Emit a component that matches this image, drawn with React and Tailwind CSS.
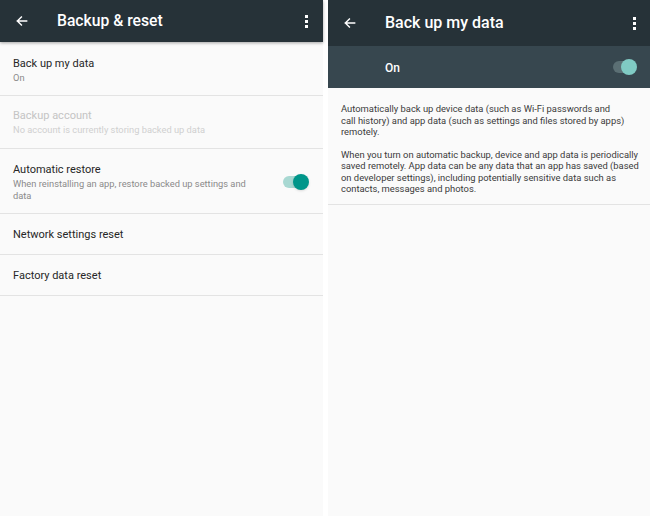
import React from "react";

const font = { fontFamily: "Roboto, 'Noto Sans', sans-serif" };

function Arrow() {
  return (
    <svg width="14" height="14" viewBox="0 0 24 24" fill="none">
      <path d="M20 12H4M11 5l-7 7 7 7" stroke="#fff" strokeWidth="2.4" strokeLinecap="square" />
    </svg>
  );
}

function Dots() {
  return (
    <div className="flex flex-col gap-[2px]">
      <div className="w-[3px] h-[3px] bg-white" />
      <div className="w-[3px] h-[3px] bg-white" />
      <div className="w-[3px] h-[3px] bg-white" />
    </div>
  );
}

function Row({ title, sub, disabled, toggle, h }) {
  return (
    <div className={`flex items-center border-b border-[#e3e3e3] pl-[13px] pr-[16px] ${h}`}>
      <div className="flex-1 min-w-0">
        <div className={`text-[11px] leading-[15px] ${disabled ? "text-[#c4c4c4]" : "text-[#262626]"}`}>{title}</div>
        {sub && (
          <div className={`text-[9.3px] leading-[12px] mt-[1px] w-[245px] ${disabled ? "text-[#d0d0d0]" : "text-[#8a8a8a]"}`}>{sub}</div>
        )}
      </div>
      {toggle && (
        <div className="relative w-[24px] h-[12px]">
          <div className="absolute left-0 top-0 w-[22px] h-[12px] rounded-full bg-[#a8d8d2]" />
          <div className="absolute right-[-2px] top-[-2px] w-[16px] h-[16px] rounded-full bg-[#00968a] shadow" />
        </div>
      )}
    </div>
  );
}

export default function App() {
  return (
    <div className="w-[650px] h-[516px] bg-white flex overflow-hidden" style={font}>
      <div className="w-[323px] shrink-0 h-full bg-[#fafafa] flex flex-col">
        <div className="h-[42px] bg-[#263238] flex items-center pl-[15px] pr-[15px] shadow-[0_1px_3px_rgba(0,0,0,0.35)] relative z-10">
          <Arrow />
          <div className="ml-[28px] text-white text-[15.7px] font-medium flex-1">Backup &amp; reset</div>
          <Dots />
        </div>
        <Row title="Back up my data" sub="On" h="h-[54px] pt-[2px]" />
        <Row title="Backup account" sub="No account is currently storing backed up data" disabled h="h-[53px]" />
        <Row title="Automatic restore" sub="When reinstalling an app, restore backed up settings and data" toggle h="h-[65px] pt-[2px]" />
        <Row title="Network settings reset" h="h-[41px]" />
        <Row title="Factory data reset" h="h-[41px]" />
      </div>
      <div className="w-[5px] shrink-0 h-full bg-white" />
      <div className="w-[322px] shrink-0 h-full bg-[#fafafa] flex flex-col">
        <div className="h-[46px] bg-[#263238] flex items-center pl-[15px] pr-[14px]">
          <Arrow />
          <div className="ml-[28px] text-white text-[16px] font-medium flex-1">Back up my data</div>
          <Dots />
        </div>
        <div className="h-[42px] bg-[#37474f] flex items-center pl-[57px] pr-[15px]">
          <div className="flex-1 text-white text-[12px] font-medium pt-[2px]">On</div>
          <div className="relative w-[22px] h-[12px]">
            <div className="absolute left-0 top-0 w-[20px] h-[12px] rounded-full bg-[#5b6f74]" />
            <div className="absolute right-[-2px] top-[-2px] w-[16px] h-[16px] rounded-full bg-[#80cbc4]" />
          </div>
        </div>
        <div className="px-[13px] pt-[15px] pb-[9px] border-b border-[#e3e3e3] text-[9.4px] leading-[11.5px] text-[#3a3a3a] whitespace-nowrap">
          <p>
            Automatically back up device data (such as Wi-Fi passwords and
            <br />
            call history) and app data (such as settings and files stored by apps)
            <br />
            remotely.
          </p>
          <p className="mt-[11px]">
            When you turn on automatic backup, device and app data is periodically
            <br />
            saved remotely. App data can be any data that an app has saved (based
            <br />
            on developer settings), including potentially sensitive data such as
            <br />
            contacts, messages and photos.
          </p>
        </div>
      </div>
    </div>
  );
}
